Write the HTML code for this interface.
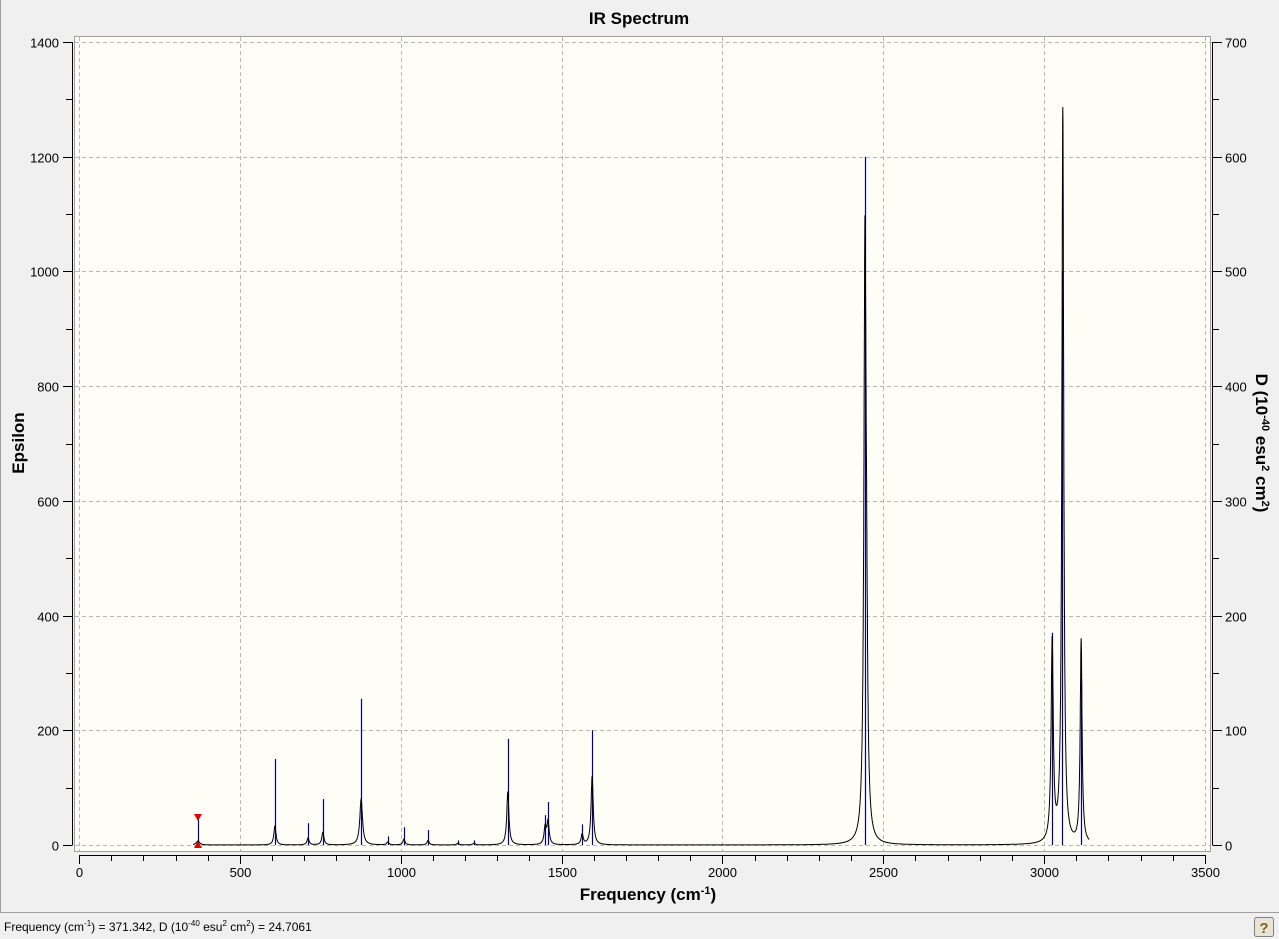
<!DOCTYPE html>
<html><head><meta charset="utf-8"><style>
html,body{margin:0;padding:0;width:1279px;height:939px;overflow:hidden;background:#f0f0f0;font-family:"Liberation Sans",Arial,sans-serif;}
svg{position:absolute;left:0;top:0}
</style></head><body>
<svg id="s" width="1279" height="939" xmlns="http://www.w3.org/2000/svg" font-family="Liberation Sans, Arial, sans-serif">
<rect x="0" y="0" width="1279" height="912" fill="#f0f0f0"/>
<line x1="0.5" y1="0" x2="0.5" y2="912" stroke="#a0a0a0"/>
<line x1="0" y1="912.5" x2="1279" y2="912.5" stroke="#a0a0a0"/>
<rect x="74.5" y="36.5" width="1136" height="815" fill="#fefef6" stroke="#a0a0a0"/>
<g id="grid" stroke="#b8b8b8" stroke-dasharray="4,3" stroke-width="1"></g>
<g id="ax" stroke="#000" stroke-width="1"></g>
<g id="lbl" font-size="13" fill="#000"></g>
<text x="639" y="24" font-size="17" font-weight="bold" text-anchor="middle">IR Spectrum</text>
<text x="648" y="900" font-size="17" font-weight="bold" text-anchor="middle">Frequency (cm<tspan dy="-6" font-size="11">-1</tspan><tspan dy="6">)</tspan></text>
<text transform="translate(24,443) rotate(-90)" font-size="17" font-weight="bold" text-anchor="middle">Epsilon</text>
<text transform="translate(1256,443) rotate(90)" font-size="17" font-weight="bold" text-anchor="middle">D (10<tspan dy="-6" font-size="11">-40</tspan><tspan dy="6"> esu</tspan><tspan dy="-6" font-size="11">2</tspan><tspan dy="6"> cm</tspan><tspan dy="-6" font-size="11">2</tspan><tspan dy="6">)</tspan></text>
<g id="sticks" stroke="#00008b" stroke-width="1.2"></g>
<path id="curve" fill="none" stroke="#000" stroke-width="1"/>
<polygon points="194,814 202,814 198,821" fill="#e00000"/>
<polygon points="194,848 202,848 198,841" fill="#e00000"/>
<text x="4" y="931" font-size="12">Frequency (cm<tspan dy="-5" font-size="8">-1</tspan><tspan dy="5">) = 371.342, D (10</tspan><tspan dy="-5" font-size="8">-40</tspan><tspan dy="5"> esu</tspan><tspan dy="-5" font-size="8">2</tspan><tspan dy="5"> cm</tspan><tspan dy="-5" font-size="8">2</tspan><tspan dy="5">) = 24.7061</tspan></text>
<rect x="1254.5" y="917.5" width="19" height="19" rx="2" fill="#e8e4d8" stroke="#808080"/>
<text x="1264" y="933" font-size="15" font-weight="bold" fill="#806020" text-anchor="middle">?</text>
</svg>
<script>
var NS="http://www.w3.org/2000/svg";
function X(f){return 79+f*1126/3500;}
function Y(e){return 845-e*803/1400;}
function el(p,t,a,txt){var e=document.createElementNS(NS,t);for(var k in a)e.setAttribute(k,a[k]);if(txt!==undefined)e.textContent=txt;document.getElementById(p).appendChild(e);}
for(var f=0;f<=3500;f+=500){var x=Math.round(X(f))+0.5;el('grid','line',{x1:x,y1:37,x2:x,y2:851});}
for(var e=0;e<=1400;e+=200){var y=Math.round(Y(e))+0.5;el('grid','line',{x1:75,y1:y,x2:1210,y2:y});}
el('ax','line',{x1:72.5,y1:Y(1400),x2:72.5,y2:Y(0)+0.5});
for(var e=0;e<=1400;e+=100){var y=Math.round(Y(e))+0.5;el('ax','line',{x1:e%200?66:63,y1:y,x2:72,y2:y});if(e%200==0)el('lbl','text',{x:59,y:y+5,'text-anchor':'end'},e);}
el('ax','line',{x1:1212.5,y1:Y(1400),x2:1212.5,y2:Y(0)+0.5});
for(var d=0;d<=700;d+=50){var y=Math.round(Y(d*2))+0.5;el('ax','line',{x1:1213,y1:y,x2:d%100?1219:1222,y2:y});if(d%100==0)el('lbl','text',{x:1225,y:y+5},d);}
el('ax','line',{x1:X(0),y1:855.5,x2:X(3500),y2:855.5});
for(var f=0;f<=3500;f+=100){var x=Math.round(X(f))+0.5;el('ax','line',{x1:x,y1:855,x2:x,y2:f%500?861:864});if(f%500==0)el('lbl','text',{x:x,y:877,'text-anchor':'middle'},f);}
var S=[[370,48],[609,150],[712,38],[758,80],[877,255],[960,15],[1010,31],[1085,26],[1178,8],[1228,8],[1333,185],[1449,52],[1458,75],[1564,36],[1595,200],[2443,1200],[3025,370],[3056,1000],[3115,290]];
S.forEach(function(s){var x=Math.round(X(s[0]))+0.5;el('sticks','line',{x1:x,y1:Y(0),x2:x,y2:Y(s[1])});});
var P=[[370,7,6],[609,33,4],[712,12,4],[758,22,4],[877,80,5],[960,5,4],[1010,10,4],[1085,8,4],[1178,3,4],[1228,3,4],[1333,93,4],[1449,30,4],[1458,40,4],[1564,18,4],[1595,120,4],[2443,1000,4],[2448,250,4],[3025,350,4],[3058,1280,3.5],[3115,355,3.5]];
var d="";for(var f=355;f<=3140;f+=0.5){var e=0;P.forEach(function(p){var u=(f-p[0])/p[2];e+=p[1]/(1+u*u);});d+=(d?"L":"M")+X(f).toFixed(1)+","+Y(e).toFixed(1);}
document.getElementById('curve').setAttribute('d',d);
</script>
</body></html>
